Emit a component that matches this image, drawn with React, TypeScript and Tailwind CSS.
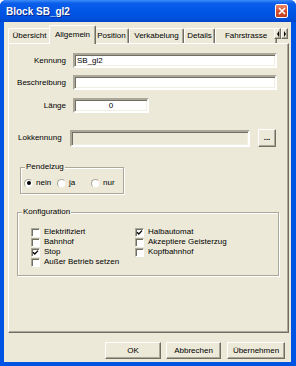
import React from "react";

const FONT = "font-['Liberation_Sans',Arial,sans-serif]";

const TABS = [
  { label: "Übersicht", w: "w-[43px]" },
  { label: "Allgemein", w: "w-[47px]", active: true },
  { label: "Position", w: "w-[35px]" },
  { label: "Verkabelung", w: "w-[55px]" },
  { label: "Details", w: "w-[31px]" },
  { label: "Fahrstrasse", w: "w-[62px]" },
];

const sunken =
  "border-2 border-t-[#ACA899] border-l-[#ACA899] border-b-white border-r-white shadow-[inset_1px_1px_0_#716F64,inset_-1px_-1px_0_#F1EFE2]";
const raised =
  "border border-t-white border-l-white border-b-[#716F64] border-r-[#716F64] shadow-[inset_-1px_-1px_0_#ACA899]";

function Check({ checked, label }: { checked?: boolean; label: string }) {
  return (
    <div className="flex items-center h-[10px]">
      <span className="w-[9px] h-[9px] bg-white flex items-center justify-center border border-t-[#ACA899] border-l-[#ACA899] border-b-white border-r-white shadow-[inset_1px_1px_0_#716F64]">
        {checked && (
          <svg width="7" height="7" viewBox="0 0 7 7">
            <path d="M1 3.2 L2.8 5 L6 1.6" stroke="#000" strokeWidth="1.3" fill="none" />
          </svg>
        )}
      </span>
      <span className="ml-[4px] leading-[10px]">{label}</span>
    </div>
  );
}

function Radio({ checked, label, w }: { checked?: boolean; label: string; w: string }) {
  return (
    <div className={`flex items-center ${w}`}>
      <span className="w-[9px] h-[9px] rounded-full bg-white border border-t-[#ACA899] border-l-[#ACA899] border-b-[#F1EFE2] border-r-[#F1EFE2] flex items-center justify-center">
        {checked && <span className="w-[4px] h-[4px] rounded-full bg-black" />}
      </span>
      <span className="ml-[3px] leading-[10px]">{label}</span>
    </div>
  );
}

export default function App() {
  return (
    <div className={`w-[296px] h-[366px] flex flex-col overflow-hidden rounded-t-[6px] bg-[#0054E3] text-[8px] text-black ${FONT}`}>
      {/* Title bar */}
      <div className="h-[22px] shrink-0 flex items-center justify-between pl-[6px] pr-[8px] bg-[linear-gradient(180deg,#3D8DF8_0%,#0A5EEA_15%,#0055E5_55%,#0050DC_85%,#0046C8_100%)]">
        <span className="text-white font-bold text-[10px] [text-shadow:1px_1px_0_#0A2A8A]">Block SB_gl2</span>
        <span className="w-[13px] h-[14px] rounded-[2px] border border-white bg-[linear-gradient(180deg,#EC8A6C,#D8502E_50%,#C2401F)] flex items-center justify-center">
          <svg width="8" height="8" viewBox="0 0 8 8">
            <path d="M1 1 L7 7 M7 1 L1 7" stroke="#fff" strokeWidth="1.6" />
          </svg>
        </span>
      </div>

      {/* Window body */}
      <div className="flex-1 flex flex-col ml-[4px] mr-[5px] mb-[4px] bg-[#ECE9D8]">
        {/* Tab strip */}
        <div className="relative h-[21px] shrink-0 flex items-end pl-[4px]">
          {TABS.map((t) =>
            t.active ? (
              <div
                key={t.label}
                className={`relative z-10 -mx-[2px] -mb-[1px] h-[19px] ${t.w} bg-[#ECE9D8] rounded-t-[2px] border-t border-l border-white border-r border-r-[#716F64] shadow-[inset_-1px_0_0_#ACA899] flex items-start justify-center pt-[4px] leading-[10px]`}
              >
                {t.label}
              </div>
            ) : (
              <div
                key={t.label}
                className={`h-[15px] ${t.w} shrink-0 bg-[#ECE9D8] rounded-t-[2px] border-t border-l border-white border-r border-r-[#716F64] shadow-[inset_-1px_0_0_#ACA899] flex items-center justify-center leading-[10px]`}
              >
                {t.label}
              </div>
            )
          )}
          {/* Scroll arrows */}
          <div className="absolute left-[270px] top-[6px] z-20 flex">
            <span className={`w-[7px] h-[11px] bg-[#ECE9D8] ${raised} flex items-center justify-center`}>
              <span className="w-0 h-0 border-y-[3px] border-y-transparent border-r-[2px] border-r-black" />
            </span>
            <span className={`w-[7px] h-[11px] bg-[#ECE9D8] ${raised} flex items-center justify-center`}>
              <span className="w-0 h-0 border-y-[3px] border-y-transparent border-l-[2px] border-l-black" />
            </span>
          </div>
        </div>

        {/* Tab page */}
        <div className="ml-[4px] mr-[2px] h-[290px] shrink-0 border border-t-white border-l-white border-r-[#716F64] border-b-[#716F64] shadow-[inset_-1px_-1px_0_#ACA899] flex flex-col">
          {/* Kennung */}
          <div className="flex items-center mt-[9px]">
            <span className="w-[57px] text-right">Kennung</span>
            <div className={`ml-[7px] w-[204px] h-[15px] bg-white ${sunken} flex items-center pl-[2px] leading-[10px]`}>SB_gl2</div>
          </div>
          {/* Beschreibung */}
          <div className="flex items-center mt-[7px]">
            <span className="w-[57px] text-right">Beschreibung</span>
            <div className={`ml-[7px] w-[204px] h-[15px] bg-white ${sunken}`} />
          </div>
          {/* Länge */}
          <div className="flex items-center mt-[8px]">
            <span className="w-[57px] text-right">Länge</span>
            <div className={`ml-[7px] w-[76px] h-[15px] bg-white ${sunken} flex items-center justify-center leading-[10px]`}>0</div>
          </div>
          {/* Lokkennung */}
          <div className="flex items-center mt-[16px] pl-[9px]">
            <span className="w-[52px]">Lokkennung</span>
            <div className={`w-[180px] h-[17px] bg-[#ECE9D8] ${sunken}`} />
            <button className={`ml-[8px] w-[18px] h-[18px] bg-[#ECE9D8] ${raised} flex items-center justify-center leading-[8px] font-bold`}>...</button>
          </div>

          {/* Pendelzug */}
          <div className="relative mt-[20px] ml-[11px] w-[104px] h-[27px] border border-[#ACA899] shadow-[1px_1px_0_#fff,inset_1px_1px_0_#fff]">
            <span className="absolute left-[4px] -top-[6px] px-[1px] bg-[#ECE9D8] leading-[10px]">Pendelzug</span>
            <div className="flex mt-[10px] pl-[3px]">
              <Radio checked label="nein" w="w-[33px]" />
              <Radio label="ja" w="w-[34px]" />
              <Radio label="nur" w="w-[30px]" />
            </div>
          </div>

          {/* Konfiguration */}
          <div className="relative mt-[18px] ml-[8px] w-[262px] h-[64px] border border-[#ACA899] shadow-[1px_1px_0_#fff,inset_1px_1px_0_#fff]">
            <span className="absolute left-[4px] -top-[6px] px-[1px] bg-[#ECE9D8] leading-[10px]">Konfiguration</span>
            <div className="grid grid-cols-[104px_1fr] pl-[13px] pt-[14px]">
              <div className="flex flex-col">
                <Check label="Elektrifiziert" />
                <Check label="Bahnhof" />
                <Check checked label="Stop" />
                <Check label="Außer Betrieb setzen" />
              </div>
              <div className="flex flex-col">
                <Check checked label="Halbautomat" />
                <Check label="Akzeptiere Geisterzug" />
                <Check label="Kopfbahnhof" />
              </div>
            </div>
          </div>
        </div>

        {/* Buttons */}
        <div className="flex justify-end mt-[9px] pr-[6px]">
          <button className={`w-[56px] h-[17px] bg-[#ECE9D8] ${raised} leading-[10px]`}>OK</button>
          <button className={`ml-[5px] w-[55px] h-[17px] bg-[#ECE9D8] ${raised} leading-[10px]`}>Abbrechen</button>
          <button className={`ml-[6px] w-[58px] h-[17px] bg-[#ECE9D8] ${raised} leading-[10px]`}>Übernehmen</button>
        </div>
      </div>
    </div>
  );
}
